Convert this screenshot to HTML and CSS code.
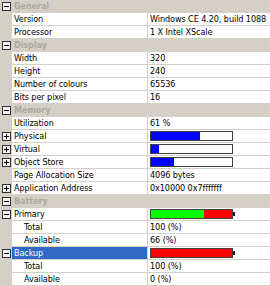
FILE: index.html
```html
<!DOCTYPE html>
<html>
<head>
<meta charset="utf-8">
<link rel="stylesheet" href="styles.css">
</head>
<body>
<div class="grid">
  <div class="row cat"><div class="gut"><span class="exp minus"></span></div><div class="label">General</div><div class="value"></div></div>
  <div class="row"><div class="gut"></div><div class="label">Version</div><div class="value">Windows CE 4.20, build 1088</div></div>
  <div class="row"><div class="gut"></div><div class="label">Processor</div><div class="value">1 X Intel XScale</div></div>
  <div class="row cat"><div class="gut"><span class="exp minus"></span></div><div class="label">Display</div><div class="value"></div></div>
  <div class="row"><div class="gut"></div><div class="label">Width</div><div class="value">320</div></div>
  <div class="row"><div class="gut"></div><div class="label">Height</div><div class="value">240</div></div>
  <div class="row"><div class="gut"></div><div class="label">Number of colours</div><div class="value">65536</div></div>
  <div class="row"><div class="gut"></div><div class="label">Bits per pixel</div><div class="value">16</div></div>
  <div class="row cat"><div class="gut"><span class="exp minus"></span></div><div class="label">Memory</div><div class="value"></div></div>
  <div class="row"><div class="gut"></div><div class="label">Utilization</div><div class="value">61 %</div></div>
  <div class="row"><div class="gut"><span class="exp plus"></span></div><div class="label">Physical</div><div class="value"><div class="bar"><div class="fill blue" style="width:60%"></div></div></div></div>
  <div class="row"><div class="gut"><span class="exp plus"></span></div><div class="label">Virtual</div><div class="value"><div class="bar"><div class="fill blue" style="width:10%"></div></div></div></div>
  <div class="row"><div class="gut"><span class="exp plus"></span></div><div class="label">Object Store</div><div class="value"><div class="bar"><div class="fill blue" style="width:29%"></div></div></div></div>
  <div class="row"><div class="gut"></div><div class="label">Page Allocation Size</div><div class="value">4096 bytes</div></div>
  <div class="row"><div class="gut"><span class="exp plus"></span></div><div class="label">Application Address</div><div class="value">0x10000 0x7fffffff</div></div>
  <div class="row cat"><div class="gut"><span class="exp minus"></span></div><div class="label">Battery</div><div class="value"></div></div>
  <div class="row"><div class="gut"><span class="exp minus"></span></div><div class="label">Primary</div><div class="value"><div class="batt"><div class="bar red"><div class="fill green" style="width:66%"></div></div><span class="nub"></span></div></div></div>
  <div class="row"><div class="gut"></div><div class="label sub">Total</div><div class="value">100 (%)</div></div>
  <div class="row"><div class="gut"></div><div class="label sub">Available</div><div class="value">66 (%)</div></div>
  <div class="row"><div class="gut"><span class="exp minus"></span></div><div class="label sel">Backup</div><div class="value"><div class="batt"><div class="bar red"><div class="fill green" style="width:0%"></div></div><span class="nub"></span></div></div></div>
  <div class="row"><div class="gut"></div><div class="label sub">Total</div><div class="value">100 (%)</div></div>
  <div class="row"><div class="gut"></div><div class="label sub">Available</div><div class="value">0 (%)</div></div>
</div>
</body>
</html>
```

FILE: styles.css
```css
html, body {
  margin: 0;
  padding: 0;
  background: #ffffff;
}
.grid {
  width: 270px;
  font-family: "DejaVu Sans Condensed", "Liberation Sans", sans-serif;
  font-size: 9px;
  letter-spacing: -0.08px;
  color: #000;
}
.row {
  display: grid;
  grid-template-columns: 12px 136px 122px;
  height: 13px;
}
.gut {
  background: #d4d0c8;
  display: flex;
  align-items: center;
  justify-content: flex-start;
  padding-left: 2px;
  box-sizing: border-box;
}
.exp {
  width: 9px;
  height: 9px;
  box-sizing: border-box;
  border: 1px solid #303030;
  background: #f4f4f4;
  position: relative;
}
.exp::before {
  content: "";
  position: absolute;
  left: 1px;
  top: 3px;
  width: 5px;
  height: 1px;
  background: #000;
}
.exp.plus::after {
  content: "";
  position: absolute;
  left: 3px;
  top: 1px;
  width: 1px;
  height: 5px;
  background: #000;
}
.label, .value {
  box-sizing: border-box;
  border-bottom: 1px solid #d4d0c8;
  line-height: 12px;
  white-space: nowrap;
  overflow: hidden;
}
.label {
  padding-left: 2px;
  border-right: 1px solid #d4d0c8;
}
.label.sub {
  padding-left: 12px;
}
.label.sel {
  background: #316ac5;
  color: #fff;
}
.value {
  padding-left: 2px;
  display: flex;
  align-items: center;
}
.cat .label, .cat .value {
  background: #d4d0c8;
  color: #aca8a0;
  font-weight: bold;
  border-color: #d4d0c8;
}
.bar {
  width: 83px;
  height: 10px;
  box-sizing: border-box;
  border: 1px solid #404040;
  background: #fff;
  display: flex;
}
.bar.red {
  background: #ff0000;
}
.fill {
  height: 100%;
}
.fill.blue {
  background: #0000ff;
}
.fill.green {
  background: #00ff00;
}
.batt {
  display: flex;
  align-items: center;
}
.nub {
  width: 2px;
  height: 4px;
  background: #202020;
}
```
